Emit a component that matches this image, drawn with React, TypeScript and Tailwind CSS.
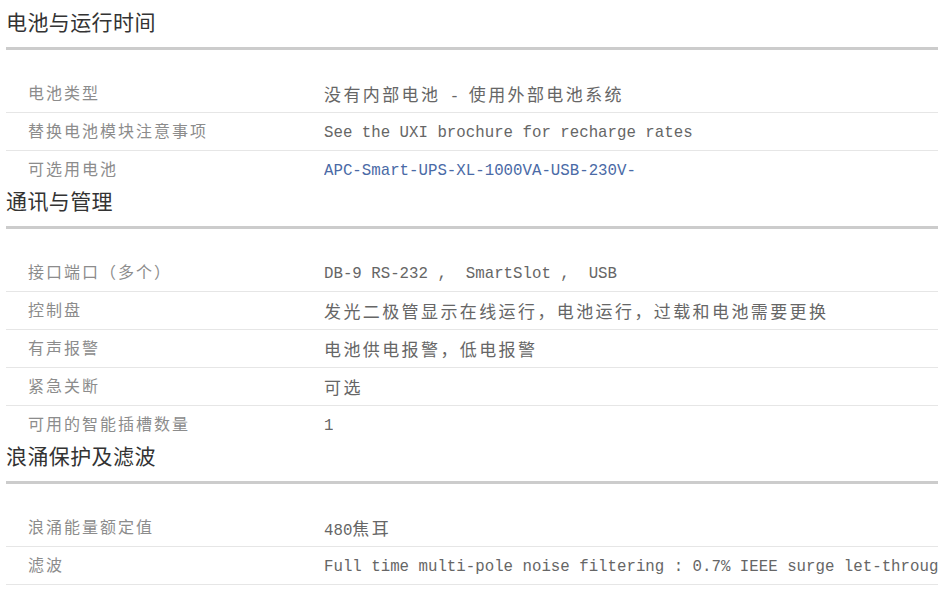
import React from 'react';

type Row = { label: string; value: string; link?: boolean };
type Section = { title: string; rows: Row[]; closed?: boolean };

const sections: Section[] = [
  {
    title: '电池与运行时间',
    rows: [
      { label: '电池类型', value: '没有内部电池 - 使用外部电池系统' },
      { label: '替换电池模块注意事项', value: 'See the UXI brochure for recharge rates' },
      { label: '可选用电池', value: 'APC-Smart-UPS-XL-1000VA-USB-230V-', link: true },
    ],
  },
  {
    title: '通讯与管理',
    rows: [
      { label: '接口端口（多个）', value: 'DB-9 RS-232 ,  SmartSlot ,  USB' },
      { label: '控制盘', value: '发光二极管显示在线运行，电池运行，过载和电池需要更换' },
      { label: '有声报警', value: '电池供电报警，低电报警' },
      { label: '紧急关断', value: '可选' },
      { label: '可用的智能插槽数量', value: '1' },
    ],
  },
  {
    title: '浪涌保护及滤波',
    closed: true,
    rows: [
      { label: '浪涌能量额定值', value: '480焦耳' },
      { label: '滤波', value: 'Full time multi-pole noise filtering : 0.7% IEEE surge let-through' },
    ],
  },
];

// split value text into CJK and latin runs so each gets its own metrics
function Value({ text }: { text: string }) {
  const parts = text.match(/[\u3000-\u9fff\uff00-\uffef]+|[^\u3000-\u9fff\uff00-\uffef]+/g) || [];
  return (
    <>
      {parts.map((p, i) =>
        /[\u3000-\u9fff\uff00-\uffef]/.test(p) ? (
          <span key={i} className="font-['Noto_Sans_CJK_SC',sans-serif] text-[17px] tracking-[2.4px]">
            {p}
          </span>
        ) : (
          <span key={i}>{p}</span>
        )
      )}
    </>
  );
}

export default function App() {
  return (
    <div className="min-h-screen bg-white pt-[9px] font-['Noto_Sans_CJK_SC',sans-serif]">
      {sections.map((s) => (
        <div key={s.title} className="ml-[6px] w-[932px]">
          <h2 className="text-[21px] leading-[24px] tracking-[0.4px] text-[#333]">{s.title}</h2>
          <div className="mt-[14px] h-[3px] bg-[#cccccc]"></div>
          <div className="mt-[25px]">
            {s.rows.map((r, i) => {
              const last = i === s.rows.length - 1;
              return (
                <div
                  key={r.label}
                  className={
                    last && !s.closed
                      ? 'flex h-[37px] items-center'
                      : 'flex h-[38px] items-center border-b border-[#e6e6e6]'
                  }
                >
                  <div className="w-[318px] shrink-0 pb-[4px] pl-[22px] text-[16px] tracking-[2px] text-[#8c8c8c]">
                    {r.label}
                  </div>
                  <div
                    className={
                      r.link
                        ? "overflow-hidden whitespace-pre pt-[4px] font-['Liberation_Mono','Noto_Sans_CJK_SC',monospace] text-[15.75px] text-[#4a6aa6]"
                        : "overflow-hidden whitespace-pre pt-[4px] font-['Liberation_Mono','Noto_Sans_CJK_SC',monospace] text-[15.75px] text-[#666]"
                    }
                  >
                    <Value text={r.value} />
                  </div>
                </div>
              );
            })}
          </div>
        </div>
      ))}
    </div>
  );
}
